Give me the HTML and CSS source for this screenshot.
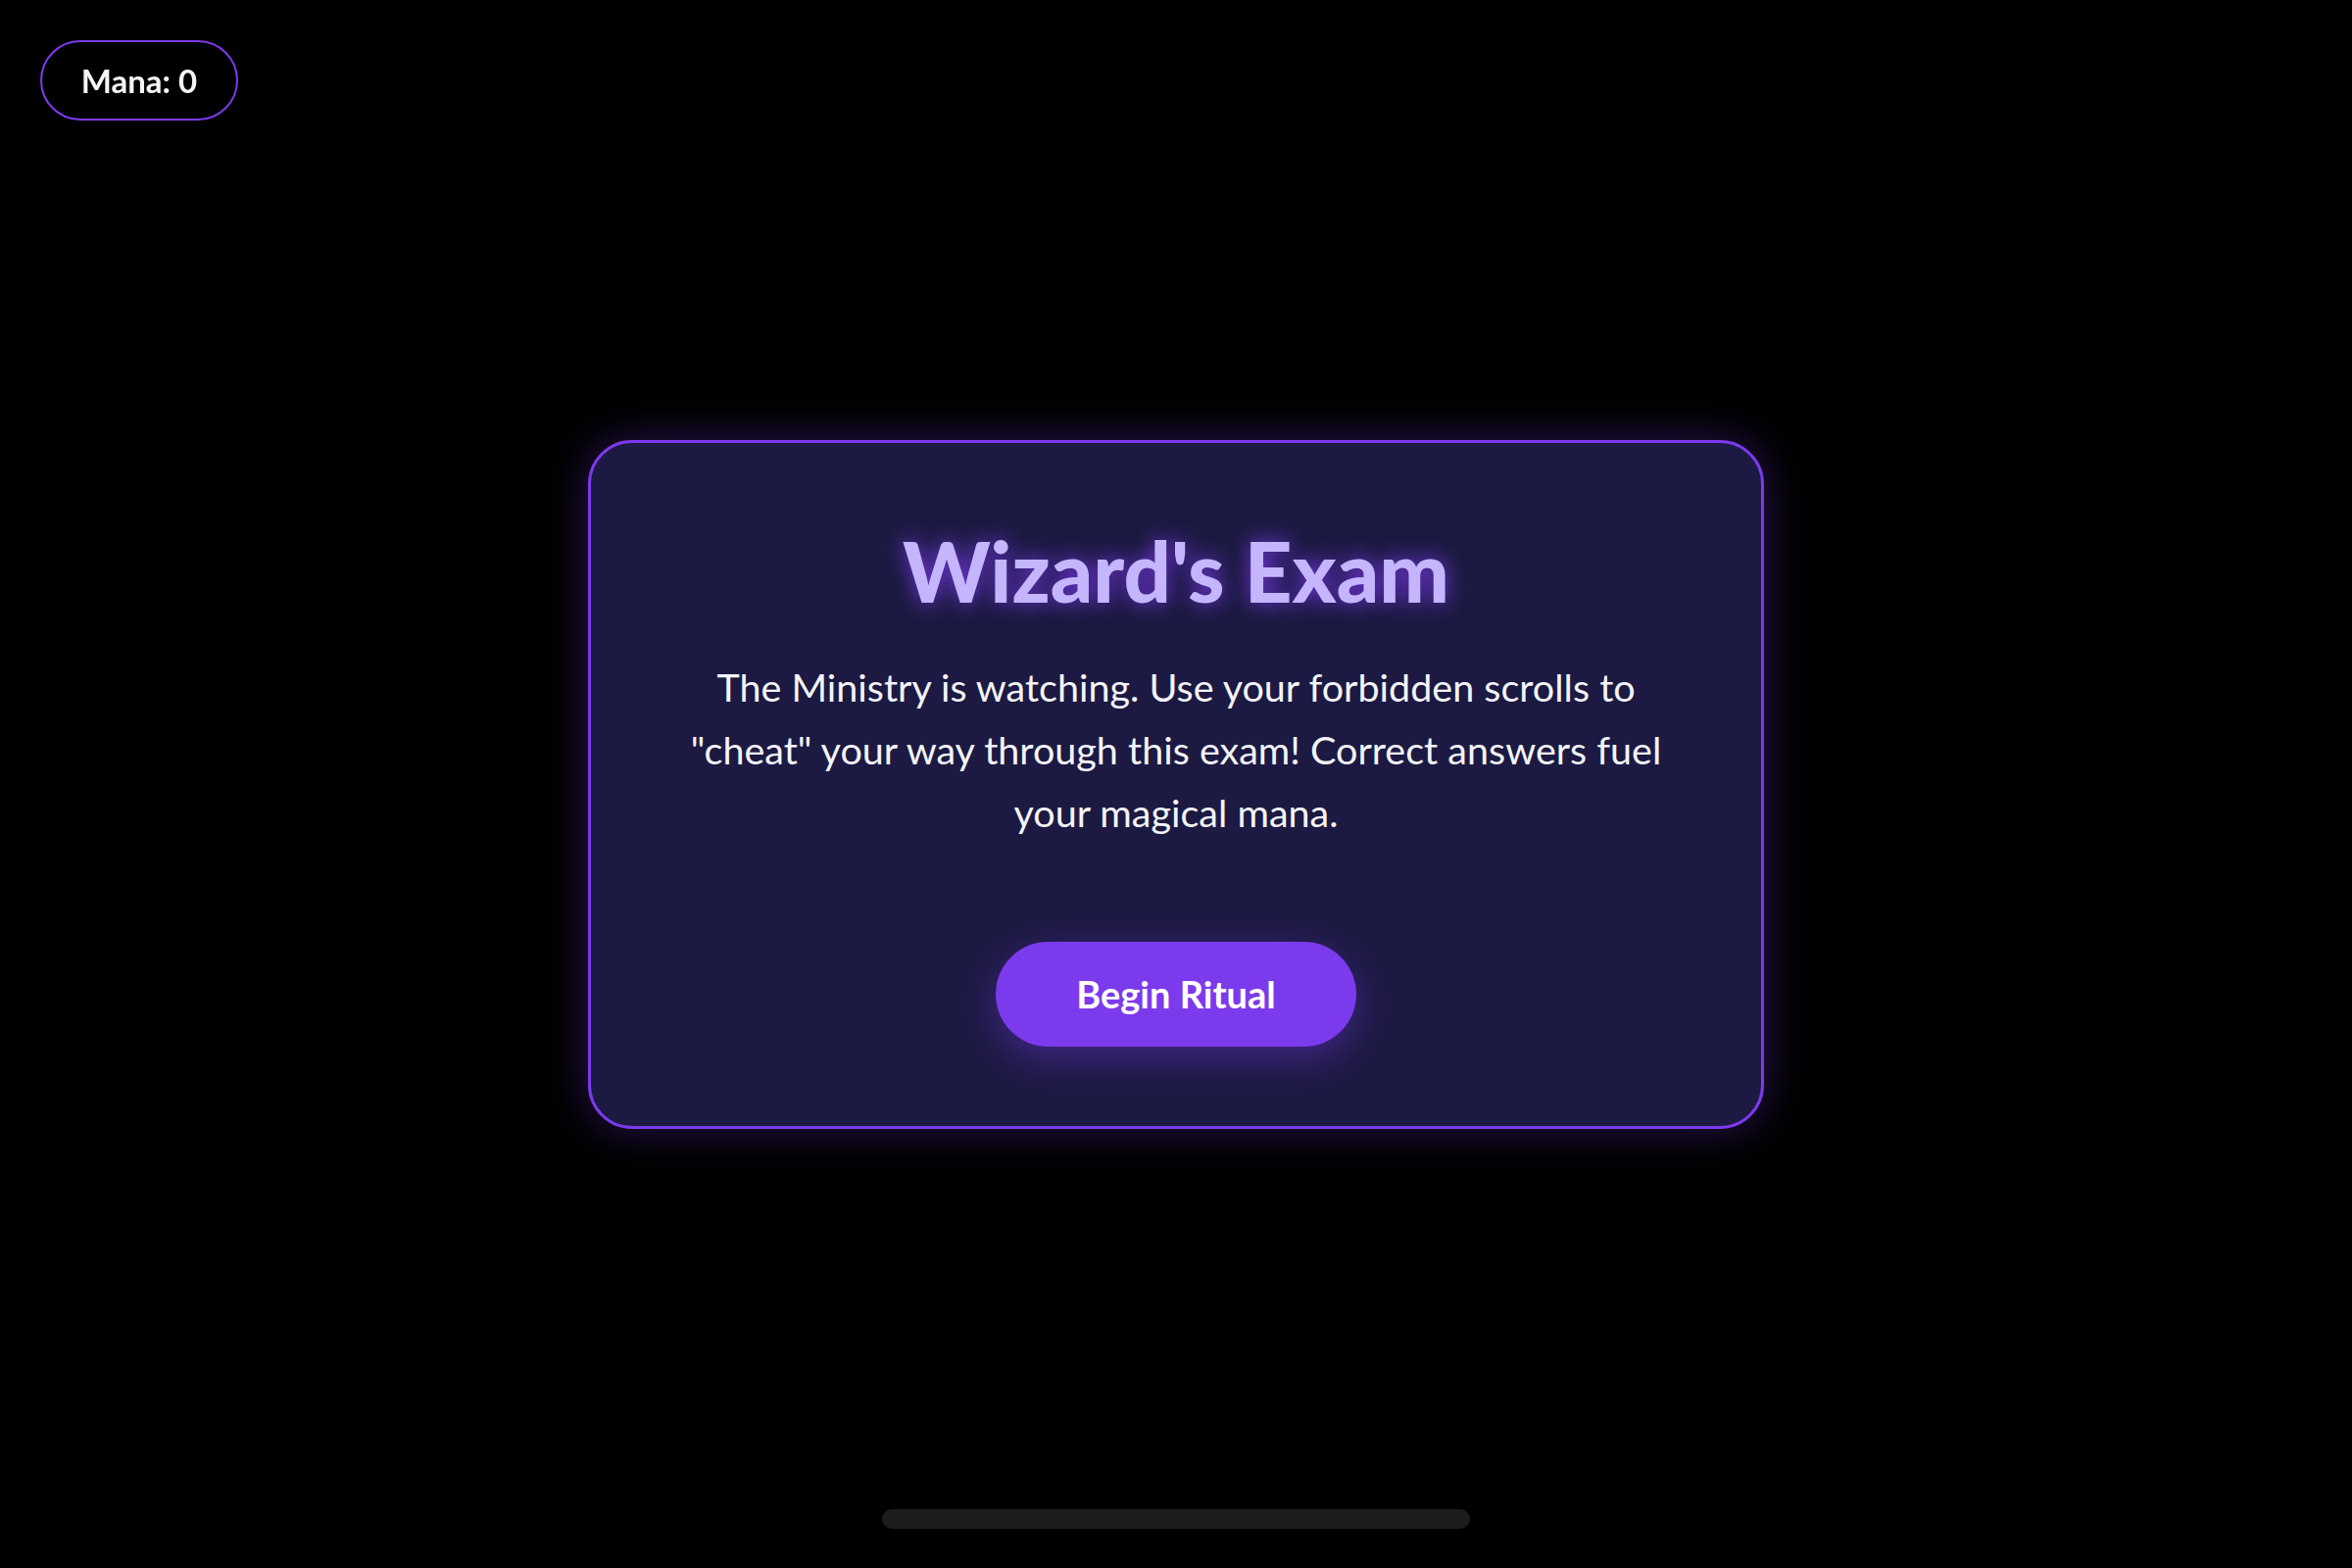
FILE: index.html
```html
<!DOCTYPE html>
<html lang="en">
<head>
<meta charset="utf-8">
<title>Wizard's Exam</title>
<link rel="stylesheet" href="styles.css">
</head>
<body>
<div class="mana">Mana: 0</div>
<main class="stage">
  <section class="card">
    <h1 class="title">Wizard's Exam</h1>
    <p class="intro">The Ministry is watching. Use your forbidden scrolls to "cheat" your way through this exam! Correct answers fuel your magical mana.</p>
    <button class="begin">Begin Ritual</button>
  </section>
</main>
<div class="home-indicator"></div>
</body>
</html>
```

FILE: styles.css
```css
* { box-sizing: border-box; }
html, body {
  margin: 0;
  padding: 0;
  background: #000;
  height: 100%;
}
body {
  font-family: "Lato", "Inter", sans-serif;
  color: #ffffff;
}
.mana {
  position: fixed;
  top: 41px;
  left: 41px;
  width: 202px;
  height: 82px;
  border: 2.5px solid #7c3aed;
  border-radius: 999px;
  display: flex;
  align-items: center;
  justify-content: center;
  font-size: 33px;
  font-weight: 700;
  color: #f5f5f5;
}
.stage {
  height: 100%;
  display: flex;
  align-items: center;
  justify-content: center;
}
.card {
  width: 1200px;
  background: #1c1a42;
  border: 3px solid #7c3aed;
  border-radius: 45px;
  padding: 79px 80px 81px;
  box-shadow: 0 0 45px rgba(124, 58, 237, 0.35);
  display: flex;
  flex-direction: column;
  align-items: center;
  text-align: center;
}
.title {
  margin: 0;
  font-size: 85px;
  line-height: 1.2;
  font-weight: 900;
  color: #c4b5fd;
  text-shadow: 0 0 20px rgba(124, 58, 237, 0.95);
}
.intro {
  margin: 36px 0 0;
  max-width: 1040px;
  font-size: 39.5px;
  line-height: 64px;
  font-weight: 400;
  color: #f4f4f8;
}
.begin {
  margin-top: 100px;
  width: 368px;
  height: 107px;
  border: none;
  border-radius: 999px;
  background: #7c3aed;
  color: #fff;
  font-family: inherit;
  font-size: 38px;
  font-weight: 700;
  box-shadow: 0 12px 40px rgba(124, 58, 237, 0.4);
  cursor: pointer;
}
.home-indicator {
  position: fixed;
  left: 900px;
  bottom: 40px;
  width: 600px;
  height: 20px;
  border-radius: 10px;
  background: #1c1c1c;
}
```
